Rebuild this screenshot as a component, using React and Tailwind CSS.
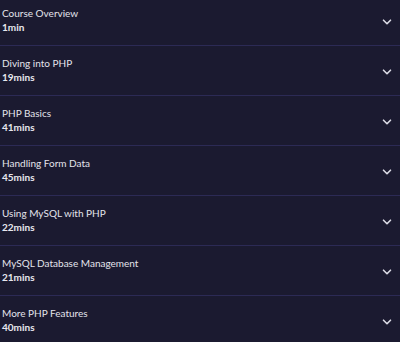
import React from 'react';

const sections = [
  { title: 'Course Overview', duration: '1min' },
  { title: 'Diving into PHP', duration: '19mins' },
  { title: 'PHP Basics', duration: '41mins' },
  { title: 'Handling Form Data', duration: '45mins' },
  { title: 'Using MySQL with PHP', duration: '22mins' },
  { title: 'MySQL Database Management', duration: '21mins' },
  { title: 'More PHP Features', duration: '40mins' },
];

function Chevron() {
  return (
    <svg width="10" height="6" viewBox="0 0 10 6" fill="none" className="shrink-0 mt-[4px]">
      <path d="M1.5 1.2l3.5 3.5 3.5-3.5" stroke="#dcdce6" strokeWidth="1.6" strokeLinecap="round" strokeLinejoin="round" />
    </svg>
  );
}

export default function App() {
  return (
    <div className="h-[342px] w-[400px] overflow-hidden bg-[#1b1a30] font-['Lato',sans-serif]">
      <div className="-mt-[4px]">
        {sections.map((s) => (
          <div
            key={s.title}
            className="flex items-center justify-between pl-[2px] pr-[8px] pt-[10px] pb-[11px] border-b border-[#2c2a55]"
          >
            <div>
              <p className="text-[10px] leading-[14px] text-[#e4e4ec]">{s.title}</p>
              <p className="text-[10px] leading-[14px] font-bold text-[#e8e8ef]">{s.duration}</p>
            </div>
            <Chevron />
          </div>
        ))}
      </div>
    </div>
  );
}
